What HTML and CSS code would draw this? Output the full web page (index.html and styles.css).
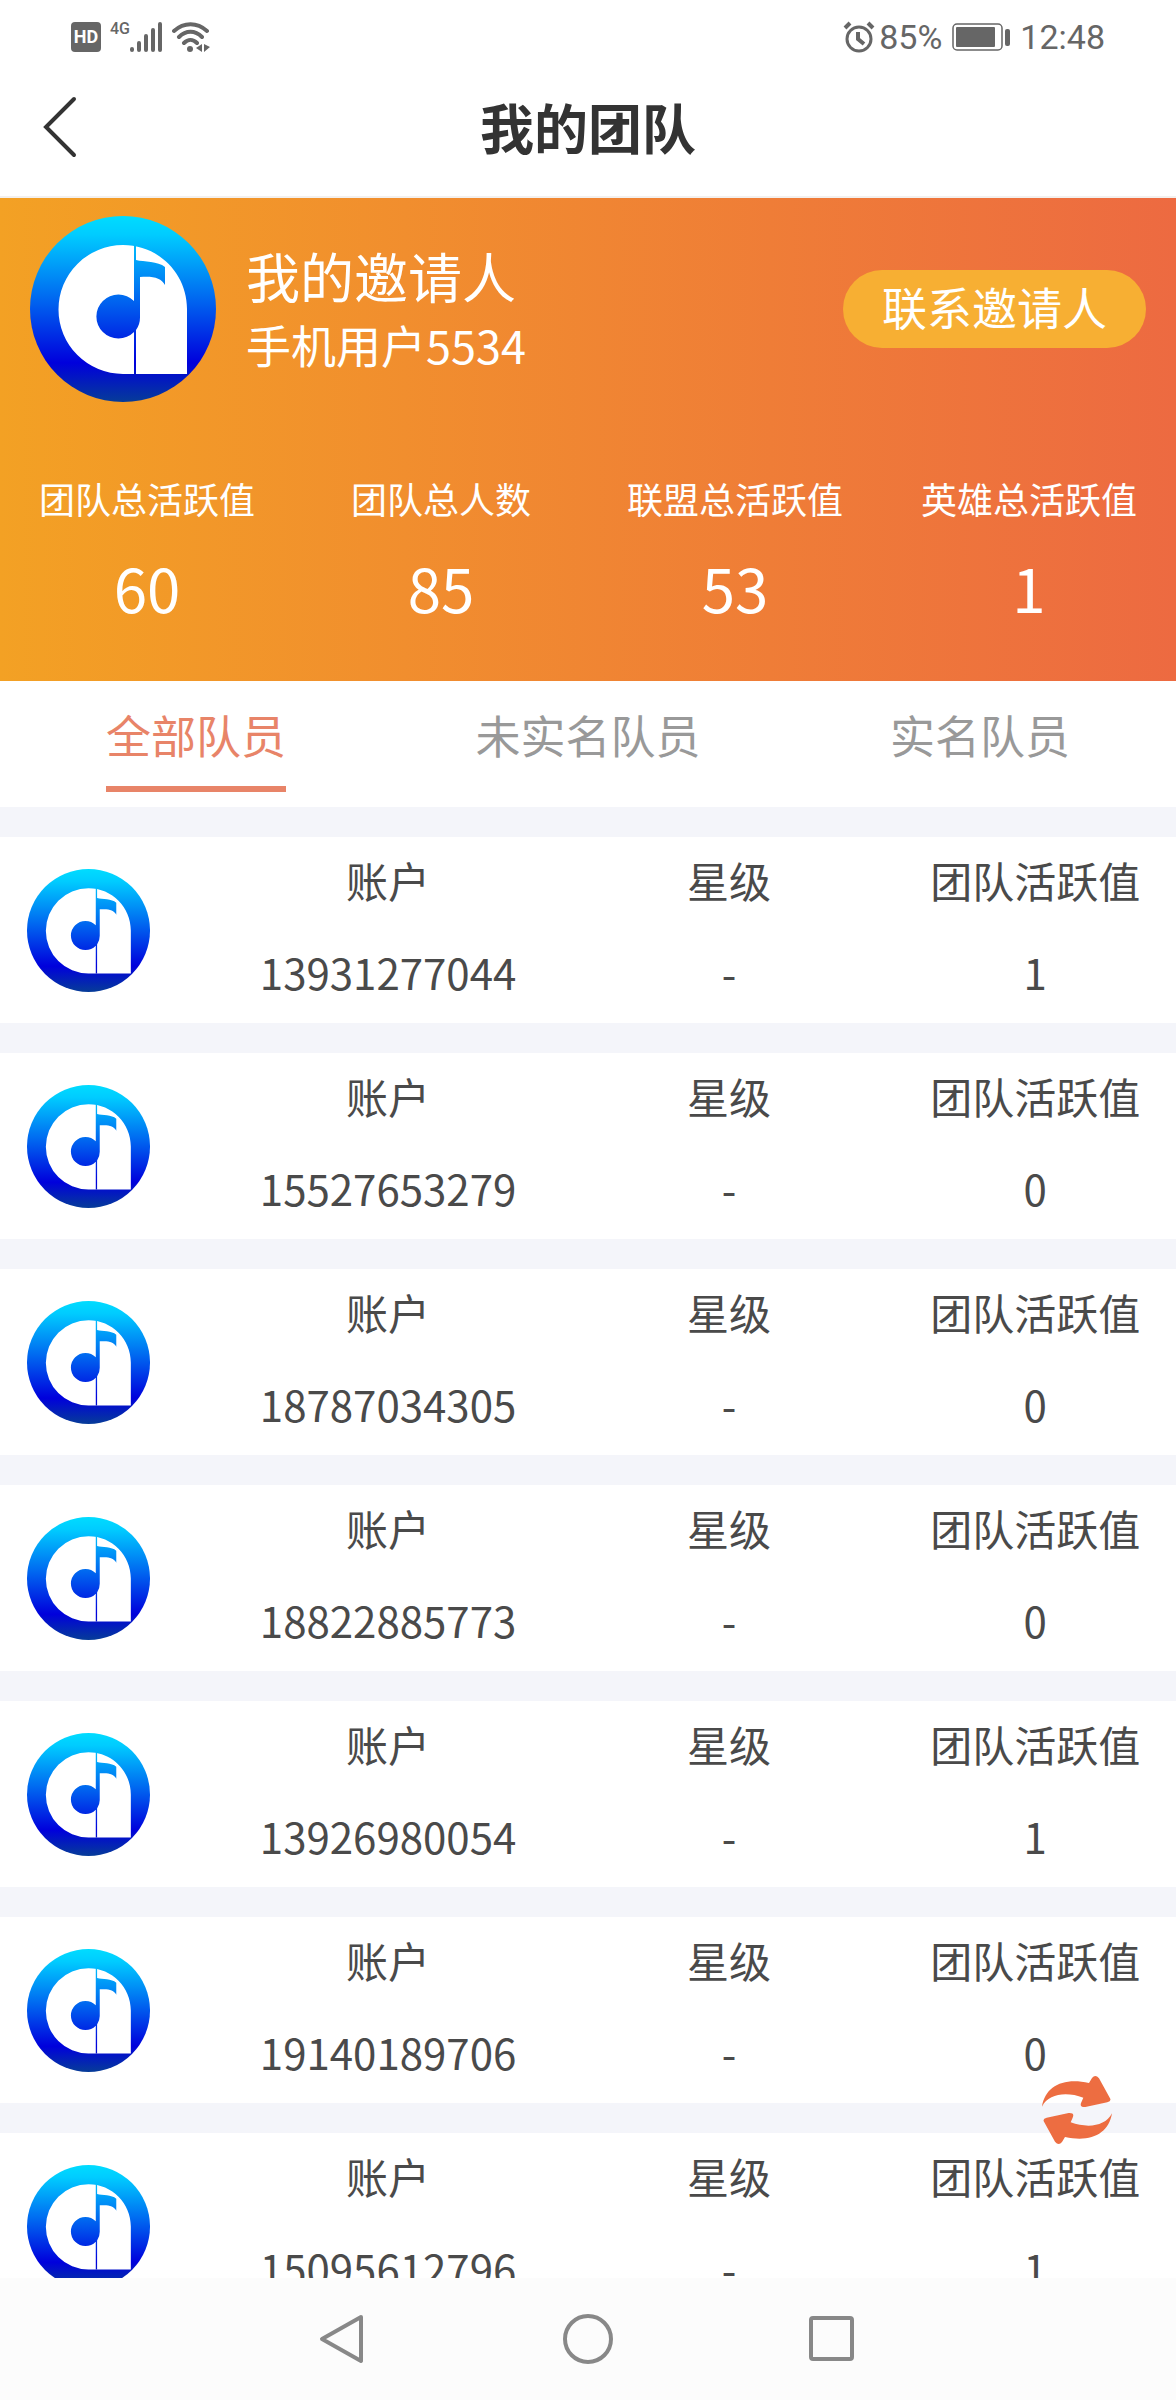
FILE: index.html
```html
<!DOCTYPE html>
<html lang="zh-CN">
<head>
  <meta charset="UTF-8">
  <title>我的团队</title>
  <meta name="viewport" content="width=device-width, initial-scale=1.0">
  <link rel="stylesheet" href="styles.css">
</head>
<body>
  <!-- Shared logo -->
  <svg class="defs" width="0" height="0" aria-hidden="true">
    <defs>
      <linearGradient id="logoBlue" gradientUnits="userSpaceOnUse" x1="0" y1="0" x2="0" y2="186">
        <stop offset="0" stop-color="#00dcff"/>
        <stop offset="0.1" stop-color="#00ccff"/>
        <stop offset="0.45" stop-color="#0066f0"/>
        <stop offset="0.79" stop-color="#0000dc"/>
        <stop offset="1" stop-color="#063c98"/>
      </linearGradient>
      <symbol id="logo" viewBox="0 0 186 186">
        <circle cx="93" cy="93" r="93" fill="url(#logoBlue)"/>
        <path d="M93 29C129 29 157 58 157 93V158H93A64 64 0 0 1 93 29Z" fill="#fff"/>
        <path d="M104 29H106V44C114 46 128 45 135 51V69C131 62 124 60 110 61V101A22 22 0 0 1 106 114V158H104V116A22 22 0 1 1 104 85Z" fill="url(#logoBlue)"/>
      </symbol>
    </defs>
  </svg>

  <!-- Status bar -->
  <div class="status-bar">
    <div class="status-group">
      <span class="hd">HD</span>
      <div class="signal">
        <span class="net">4G</span>
        <svg width="33" height="32" viewBox="0 0 33 32" stroke="#666" stroke-width="4" stroke-linecap="round">
          <path d="M2 28V29M9 22V29M16 15V29M23 9V29M30 3V29"/>
        </svg>
      </div>
      <svg class="wifi" width="38" height="32" viewBox="0 0 38 32" fill="none" stroke="#666" stroke-width="4" stroke-linecap="round">
        <path d="M2 10C12 1 25 1 35 10M7 16C14 9 23 9 30 16M12 22C16 18 21 18 25 22"/>
        <circle cx="18" cy="28" r="3" fill="#666" stroke="none"/>
        <path d="M30 23V31L24 27ZM32 23L38 26L32 31Z" fill="#666" stroke="none"/>
      </svg>
    </div>
    <div class="status-group status-right">
      <svg width="32" height="32" viewBox="0 0 32 32" fill="none" stroke="#666" stroke-width="3">
        <circle cx="16" cy="18" r="12"/>
        <path d="M15 11V18L21 23M2 7L7 2M25 2L30 7" stroke-width="4"/>
      </svg>
      <span class="battery-text">85%</span>
      <svg class="battery" width="58" height="28" viewBox="0 0 58 28">
        <rect x="1" y="1" width="49" height="26" rx="4" fill="none" stroke="#666" stroke-width="1.5"/>
        <rect x="4" y="4" width="39" height="20" rx="1" fill="#666"/>
        <rect x="53" y="6" width="5" height="17" rx="2" fill="#666"/>
      </svg>
      <span>12:48</span>
    </div>
  </div>

  <!-- Title bar -->
  <header class="title-bar">
    <button type="button" class="back" aria-label="返回">
      <svg width="36" height="62" viewBox="0 0 36 62" fill="none" stroke="#333" stroke-width="4" stroke-linecap="round">
        <path d="M32 3L4 31L32 59"/>
      </svg>
    </button>
    <h1>我的团队</h1>
  </header>

  <!-- Inviter and team totals -->
  <section class="summary">
    <div class="inviter">
      <svg class="inviter-logo"><use href="#logo"/></svg>
      <div class="inviter-info">
        <h2>我的邀请人</h2>
        <p>手机用户5534</p>
      </div>
      <button type="button" class="btn">联系邀请人</button>
    </div>
    <dl class="totals">
      <div><dt>团队总活跃值</dt><dd>60</dd></div>
      <div><dt>团队总人数</dt><dd>85</dd></div>
      <div><dt>联盟总活跃值</dt><dd>53</dd></div>
      <div><dt>英雄总活跃值</dt><dd>1</dd></div>
    </dl>
  </section>

  <nav class="tabs">
    <button type="button" class="tab active">全部队员</button>
    <button type="button" class="tab">未实名队员</button>
    <button type="button" class="tab">实名队员</button>
  </nav>

  <!-- Members -->
  <main class="members">
    <article class="member">
      <svg class="member-logo"><use href="#logo"/></svg>
      <dl>
        <div><dt>账户</dt><dd>13931277044</dd></div>
        <div><dt>星级</dt><dd>-</dd></div>
        <div><dt>团队活跃值</dt><dd>1</dd></div>
      </dl>
    </article>
    <article class="member">
      <svg class="member-logo"><use href="#logo"/></svg>
      <dl>
        <div><dt>账户</dt><dd>15527653279</dd></div>
        <div><dt>星级</dt><dd>-</dd></div>
        <div><dt>团队活跃值</dt><dd>0</dd></div>
      </dl>
    </article>
    <article class="member">
      <svg class="member-logo"><use href="#logo"/></svg>
      <dl>
        <div><dt>账户</dt><dd>18787034305</dd></div>
        <div><dt>星级</dt><dd>-</dd></div>
        <div><dt>团队活跃值</dt><dd>0</dd></div>
      </dl>
    </article>
    <article class="member">
      <svg class="member-logo"><use href="#logo"/></svg>
      <dl>
        <div><dt>账户</dt><dd>18822885773</dd></div>
        <div><dt>星级</dt><dd>-</dd></div>
        <div><dt>团队活跃值</dt><dd>0</dd></div>
      </dl>
    </article>
    <article class="member">
      <svg class="member-logo"><use href="#logo"/></svg>
      <dl>
        <div><dt>账户</dt><dd>13926980054</dd></div>
        <div><dt>星级</dt><dd>-</dd></div>
        <div><dt>团队活跃值</dt><dd>1</dd></div>
      </dl>
    </article>
    <article class="member">
      <svg class="member-logo"><use href="#logo"/></svg>
      <dl>
        <div><dt>账户</dt><dd>19140189706</dd></div>
        <div><dt>星级</dt><dd>-</dd></div>
        <div><dt>团队活跃值</dt><dd>0</dd></div>
      </dl>
    </article>
    <article class="member">
      <svg class="member-logo"><use href="#logo"/></svg>
      <dl>
        <div><dt>账户</dt><dd>15095612796</dd></div>
        <div><dt>星级</dt><dd>-</dd></div>
        <div><dt>团队活跃值</dt><dd>1</dd></div>
      </dl>
    </article>
  </main>

  <button type="button" class="refresh" aria-label="刷新">
    <svg width="72" height="70" viewBox="185 105 216 210" fill="#ed6d41">
      <path id="arrow" d="M188 200C198 138 252 112 329 129L338 114Q348 102 359 115L392 175Q397 184 384 187L318 201Q299 202 306 187L312 173C262 155 208 160 188 200Z"/>
      <use href="#arrow" transform="rotate(180 293 210)"/>
    </svg>
  </button>

  <!-- System navigation -->
  <nav class="system-nav">
    <button type="button" aria-label="后退">
      <svg width="50" height="50" viewBox="0 0 50 50"><path d="M43 3L4 25L43 47Z"/></svg>
    </button>
    <button type="button" aria-label="主页">
      <svg width="50" height="50" viewBox="0 0 50 50"><circle cx="25" cy="25" r="23"/></svg>
    </button>
    <button type="button" aria-label="最近任务">
      <svg width="50" height="50" viewBox="0 0 50 50"><rect x="3" y="4" width="41" height="41" rx="2"/></svg>
    </button>
  </nav>
</body>
</html>
```
FILE: styles.css
```css
* { box-sizing: border-box; }
body {
  font-family: "Noto Sans CJK SC", sans-serif;
  background: #f4f5fa;
  margin: 0;
  color: #4a4a4a;
  height: 100vh;
  display: flex;
  flex-direction: column;
  position: relative;
}
h1, h2, p, dl, dd { margin: 0; }
h2 { font-weight: 400; }
svg { display: block; flex: none; }
button {
  font-family: inherit;
  border: none;
  background: none;
  padding: 0;
  cursor: pointer;
}
.defs { position: absolute; }

/* Status bar */
.status-bar {
  display: flex;
  justify-content: space-between;
  align-items: center;
  height: 72px;
  padding: 2px 71px 0;
  background: #fff;
  color: #666;
  font-family: Roboto, sans-serif;
  font-size: 34px;
  flex: none;
}
.status-group { display: flex; align-items: center; gap: 9px; }
.status-right { gap: 4px; }
.hd {
  width: 30px;
  line-height: 30px;
  border-radius: 4px;
  background: #666;
  color: #fff;
  font-size: 18px;
  font-weight: 700;
  text-align: center;
}
.signal { display: flex; align-items: flex-start; }
.net { font-size: 16px; line-height: 16px; font-weight: 500; }
.battery { margin: 0 6px; }

/* Title bar */
.title-bar {
  display: grid;
  grid-template-columns: 1fr auto 1fr;
  align-items: center;
  height: 126px;
  padding: 0 42px 15px;
  background: #fff;
  border-bottom: 2px solid #f3f0ee;
  flex: none;
}
.back { justify-self: start; }
h1 { font-size: 54px; line-height: 78px; font-weight: 700; color: #333; }

/* Summary */
.summary {
  background: linear-gradient(to right, #f3a124, #ed6a41);
  color: #fff;
  padding: 18px 0 51px;
  flex: none;
}
.inviter { display: flex; align-items: center; padding: 0 30px; }
.inviter-logo { width: 186px; height: 186px; margin-right: 30px; }
.inviter-info { flex: 1; }
.inviter h2 { font-size: 54px; line-height: 72px; }
.inviter p { font-size: 45px; line-height: 66px; }
.btn {
  background: #f7af33;
  color: #fff;
  font-size: 45px;
  line-height: 74px;
  padding: 0 39px 4px;
  border-radius: 39px;
}
.totals {
  display: grid;
  grid-template-columns: repeat(4, 1fr);
  padding-top: 69px;
  text-align: center;
}
.totals dt { font-size: 36px; line-height: 54px; }
.totals dd { font-size: 60px; line-height: 87px; margin-top: 18px; }

/* Tabs */
.tabs {
  display: grid;
  grid-template-columns: repeat(3, 1fr);
  justify-items: center;
  align-items: start;
  height: 126px;
  padding-top: 21px;
  background: #fff;
  flex: none;
}
.tab {
  font-size: 45px;
  line-height: 66px;
  padding-bottom: 18px;
  color: #999;
  border-bottom: 6px solid transparent;
}
.tab.active { color: #e88468; border-color: #e88468; }

/* Members */
.members {
  flex: 1;
  min-height: 0;
  overflow-y: auto;
  scrollbar-width: none;
  padding-top: 30px;
}
.member {
  display: grid;
  grid-template-columns: 15% 85%;
  align-items: center;
  height: 186px;
  margin-bottom: 30px;
  background: #fff;
}
.member-logo { width: 123px; height: 123px; margin-left: 27px; }
.member dl {
  display: grid;
  grid-template-columns: 36fr 22fr 27fr;
  text-align: center;
  font-size: 42px;
  line-height: 62px;
  padding-bottom: 9px;
}
.member dl div:last-child { padding-left: 36px; }
.member dd { margin-top: 30px; }

.refresh { position: absolute; right: 63px; bottom: 255px; }

/* System navigation */
.system-nav {
  display: flex;
  justify-content: center;
  align-items: center;
  gap: 195px;
  height: 122px;
  background: #fcfcfc;
  flex: none;
}
.system-nav svg {
  fill: none;
  stroke: #888;
  stroke-width: 4;
  stroke-linejoin: round;
}
```
